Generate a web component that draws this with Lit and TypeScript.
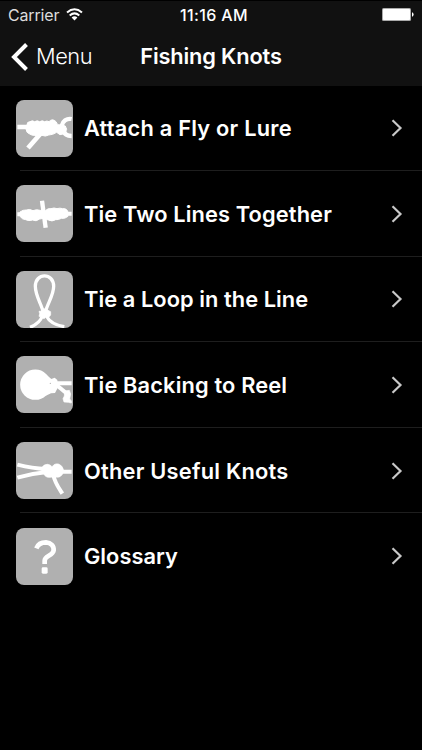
import { LitElement, html, css, svg } from "lit";
import { customElement } from "lit/decorators.js";
import { styleMap } from "lit/directives/style-map.js";

const knots = [
  {
    label: "Attach a Fly or Lure",
    spacing: 0.22,
    art: svg`
      <path d="M22 97H56" stroke-width="13"/>
      <path d="M94 114L54 160" stroke-width="14"/>
      <path d="M51 90Q51 81 60 81Q67 76 74 81Q82 76 89 81Q97 76 104 81Q111 77 117 81Q127 70 138 81L143 90L154 91L166 94L170 104L164 117L150 120L140 113Q128 121 116 121Q106 127 96 122Q85 127 75 122Q66 123 59 118Q49 115 48 103Z" fill="#fff" stroke-width="3"/>
      <path d="M185 73C170 70 158 80 155 93M162 110C164 119 172 124 185 124" stroke-width="13"/>`,
  },
  {
    label: "Tie Two Lines Together",
    spacing: 0.13,
    art: svg`
      <path d="M22 104H40M166 102H185" stroke-width="12"/>
      <path d="M96 63L107 144" stroke-width="13"/>
      <path d="M30 97Q39 90 49 91Q59 87 69 93Q80 88 90 92L106 93Q114 85 123 87Q132 83 141 87Q150 84 158 87Q168 85 173 94L174 110Q165 118 154 116Q145 121 137 120Q126 127 115 121L100 116L89 118Q78 127 68 121Q56 125 47 120Q37 120 30 110Z" fill="#fff" stroke-width="3"/>`,
  },
  {
    label: "Tie a Loop in the Line",
    spacing: 0.07,
    art: svg`
      <path d="M99 137C93 114 76 89 76 62C76 20 131 20 131 62C131 89 112 114 107 137" stroke-width="10"/>
      <path d="M97 151C91 168 77 178 60 185M109 151C118 168 137 179 163 183" stroke-width="9.5"/>
      <path d="M97 130L109 129L114 134L122 138L122 148L116 155L107 155L102 159L92 153L87 152L89 144L87 137L95 136Z" fill="#fff" stroke-width="2"/>`,
  },
  {
    label: "Tie Backing to Reel",
    spacing: 0.15,
    art: svg`
      <circle cx="76" cy="102" r="45.5" fill="#fff" stroke="none"/>
      <path d="M106 69L124 85L134 81L142 88L144 110L135 127L123 128L106 136Z" fill="#fff" stroke="none"/>
      <path d="M140 98H185" stroke-width="12"/>
      <path d="M137 101L172 130" stroke-width="12"/>
      <path d="M164 121L178 119L182 130L179 145L184 150V157L175 155L162 154L159 144L163 136Z" fill="#fff" stroke-width="2"/>
      <circle cx="121" cy="98" r="2" fill="#b0b0b0" stroke="none"/>`,
  },
  {
    label: "Other Useful Knots",
    spacing: 0.24,
    art: svg`
      <path d="M22 84C54 92 79 96 107 97M22 123C53 114 78 109 111 106" stroke-width="12"/>
      <path d="M130 115C134 137 145 152 157 171" stroke-width="12"/>
      <path d="M154 105H185" stroke-width="12"/>
      <path d="M96 92Q102 82 113 83Q121 84 126 90Q134 79 145 82Q157 86 160 98Q161 115 150 120Q142 123 134 120L121 122Q106 123 101 111Z" fill="#fff" stroke-width="2"/>`,
  },
  {
    label: "Glossary",
    spacing: 0.04,
    art: svg`
      <path d="M79 77C84 64 96 59 108 59C123 60 132 70 131 83C128 101 104 98 104 114V124" stroke-width="14"/>
      <rect x="95" y="134" width="18" height="19" rx="4" fill="#fff" stroke="none"/>`,
  },
];

@customElement("app-root")
class AppRoot extends LitElement {
  static styles = css`
    :host {
      display: flex;
      flex-direction: column;
      box-sizing: border-box;
      height: 750px;
      overflow: hidden;
      padding-top: 1px;
      background: #000;
      color: #fff;
      font-family: Inter, "Liberation Sans", sans-serif;
    }
    svg { display: block; flex: none; }
    header { height: 85px; background: #111; flex: none; }
    .status {
      display: grid;
      grid-template-columns: 1fr auto 1fr;
      align-items: center;
      height: 27px;
      padding: 0 8px;
      font-size: 16px;
      white-space: nowrap;
    }
    .carrier { display: flex; align-items: center; gap: 7px; color: #ddd; }
    .carrier span { letter-spacing: -0.15px; }
    .clock { font-weight: 500; letter-spacing: 0.35px; padding-left: 6px; }
    .battery { justify-self: end; }
    .nav {
      display: grid;
      grid-template-columns: 1fr auto 1fr;
      align-items: center;
      height: 57px;
      padding: 0 11px;
    }
    .back { display: flex; align-items: center; gap: 8px; font-size: 21.8px; font-weight: 300; letter-spacing: -0.45px; }
    .back span, h1 { padding-bottom: 2px; }
    h1 { margin: 0; font-size: 21.8px; font-weight: 600; letter-spacing: -0.15px; }
    main { margin-top: -0.6px; }
    .row {
      display: grid;
      grid-template-columns: 57px 1fr 12px;
      column-gap: 11px;
      align-items: center;
      box-sizing: border-box;
      height: 85.6px;
      padding: 0 19px 0 16px;
      background: linear-gradient(#1e1e1e, #1e1e1e) 20px 100% / 100% 1px no-repeat;
      font-size: 21.8px;
      font-weight: 600;
      white-space: nowrap;
    }
    .row:last-child { background: none; }
    .tile { border-radius: 8px; background: #b0b0b0; }
  `;

  render() {
    return html`
      <header>
        <div class="status">
          <div class="carrier">
            <span>Carrier</span>
            <svg width="17" height="13" viewBox="0 0 17 13" fill="none" stroke="#fff" stroke-width="2">
              <path d="M1 4.4Q8.5-2 16 4.4M3.7 7.4Q8.5 3.3 13.3 7.4"/>
              <path d="M5.6 9.5Q8.5 7.2 11.4 9.5L8.5 12.4Z" fill="#fff" stroke="none"/>
            </svg>
          </div>
          <div class="clock">11:16 AM</div>
          <svg class="battery" width="32" height="13" viewBox="0 0 32 13">
            <rect width="29" height="13" rx="1.5" fill="#aaa"/>
            <rect x="1" y="1" width="27" height="11" rx="0.7" fill="#fff"/>
            <path d="M30 4.3Q31.6 4.8 31.6 6.5T30 8.7Z" fill="#fff"/>
          </svg>
        </div>
        <div class="nav">
          <div class="back">
            <svg width="17" height="28" viewBox="0 0 17 28" fill="none" stroke="#fff" stroke-width="4">
              <path d="M15.5 1.5L3 14L15.5 26.5"/>
            </svg>
            <span>Menu</span>
          </div>
          <h1>Fishing Knots</h1>
        </div>
      </header>
      <main>
        ${knots.map(
          (k) => html`
            <div class="row">
              <svg class="tile" width="57" height="57" viewBox="18 16 171 171" fill="none" stroke="#fff">${k.art}</svg>
              <span style=${styleMap({ letterSpacing: `${k.spacing}px` })}>${k.label}</span>
              <svg width="12" height="18" viewBox="0 0 12 18" fill="none" stroke="#c8c8c8" stroke-width="2.2">
                <path d="M1.5 1.2L9.5 9L1.5 16.8"/>
              </svg>
            </div>`
        )}
      </main>`;
  }
}
